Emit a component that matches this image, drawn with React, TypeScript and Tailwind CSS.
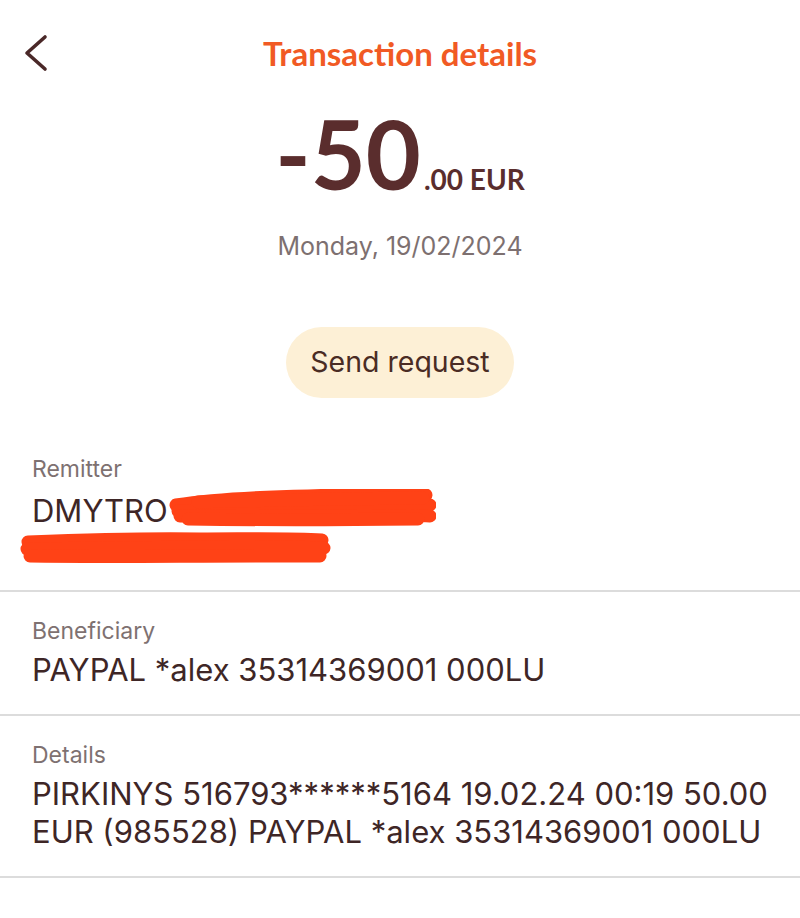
import React from "react";

const body = { fontFamily: "Inter, Roboto, sans-serif" };
const brand = { fontFamily: "Lato, 'Open Sans', sans-serif" };

function BackIcon() {
  return (
    <svg width="26" height="40" viewBox="0 0 26 40" fill="none">
      <polyline
        points="21,4 3,20 21,36"
        stroke="#4a2828"
        strokeWidth="3.6"
        strokeLinecap="round"
        strokeLinejoin="round"
      />
    </svg>
  );
}

// red marker strokes hiding the personal data
function Scribble({ width, height, lines }: { width: number; height: number; lines: string[] }) {
  return (
    <svg width={width} height={height} viewBox={`0 0 ${width} ${height}`} fill="none">
      {lines.map((d, i) => (
        <path key={i} d={d} stroke="#ff4216" strokeWidth="13" strokeLinecap="round" strokeLinejoin="round" />
      ))}
    </svg>
  );
}

function Row({ label, pb = "pb-[25px]", children }: { label: string; pb?: string; children: React.ReactNode }) {
  return (
    <div className={`border-b-2 border-[#dcdcdc] pl-8 pr-6 pt-[26px] ${pb}`} style={body}>
      <div className="text-[23px] leading-[26px] text-[#7e7171]">{label}</div>
      <div className="mt-[7px] text-[31px] leading-[38px] text-[#3e2626]">{children}</div>
    </div>
  );
}

export default function App() {
  return (
    <div className="w-[800px] min-h-[918px] bg-white">
      <div className="grid grid-cols-[80px_1fr_80px] items-center pt-[33px]">
        <div className="pl-[24px] flex items-center">
          <BackIcon />
        </div>
        <h1 className="text-center text-[33px] leading-[40px] font-bold text-[#f15a24]" style={brand}>
          Transaction details
        </h1>
        <div />
      </div>

      <div className="mt-[33px] flex items-baseline justify-center text-[#5a2d2d] font-bold" style={brand}>
        <span className="text-[95px] leading-none">-50</span>
        <span className="text-[28px] leading-none ml-[3px]">.00 EUR</span>
      </div>

      <p className="mt-[30px] text-center text-[25px] leading-[30px] text-[#7d7070]" style={body}>
        Monday, 19/02/2024
      </p>

      <div className="mt-[66px] flex justify-center">
        <button
          className="h-[71px] w-[228px] rounded-full bg-[#fdf0d6] text-[28.5px] text-[#4a2c24]"
          style={body}
        >
          Send request
        </button>
      </div>

      <div className="mt-[32px]">
        <Row label="Remitter" pb="pb-[21px]">
          <div className="flex items-center">
            <span>DMYTRO</span>
            <Scribble
              width={268}
              height={44}
              lines={[
                "M8,16 C40,11 90,8 140,7 C190,5 230,4 258,6",
                "M10,22 C60,20 120,18 170,18 C210,17 240,16 262,16",
                "M12,27 C70,28 130,27 190,27 C220,27 245,26 262,27",
                "M30,13 C100,11 170,10 255,9",
                "M20,30 C90,31 160,31 250,30",
              ]}
            />
          </div>
          <div className="-ml-[12px] -mt-[4px]">
            <Scribble
              width={314}
              height={40}
              lines={[
                "M8,13 C60,11 120,9 180,10 C230,10 270,9 302,11",
                "M7,20 C70,19 150,18 210,18 C250,18 285,18 304,19",
                "M10,27 C80,28 160,27 240,27 C270,27 290,27 300,27",
              ]}
            />
          </div>
        </Row>
        <Row label="Beneficiary">PAYPAL *alex 35314369001 000LU</Row>
        <Row label="Details">
          PIRKINYS 516793******5164 19.02.24 00:19 50.00 EUR (985528) PAYPAL *alex 35314369001 000LU
        </Row>
      </div>
    </div>
  );
}
